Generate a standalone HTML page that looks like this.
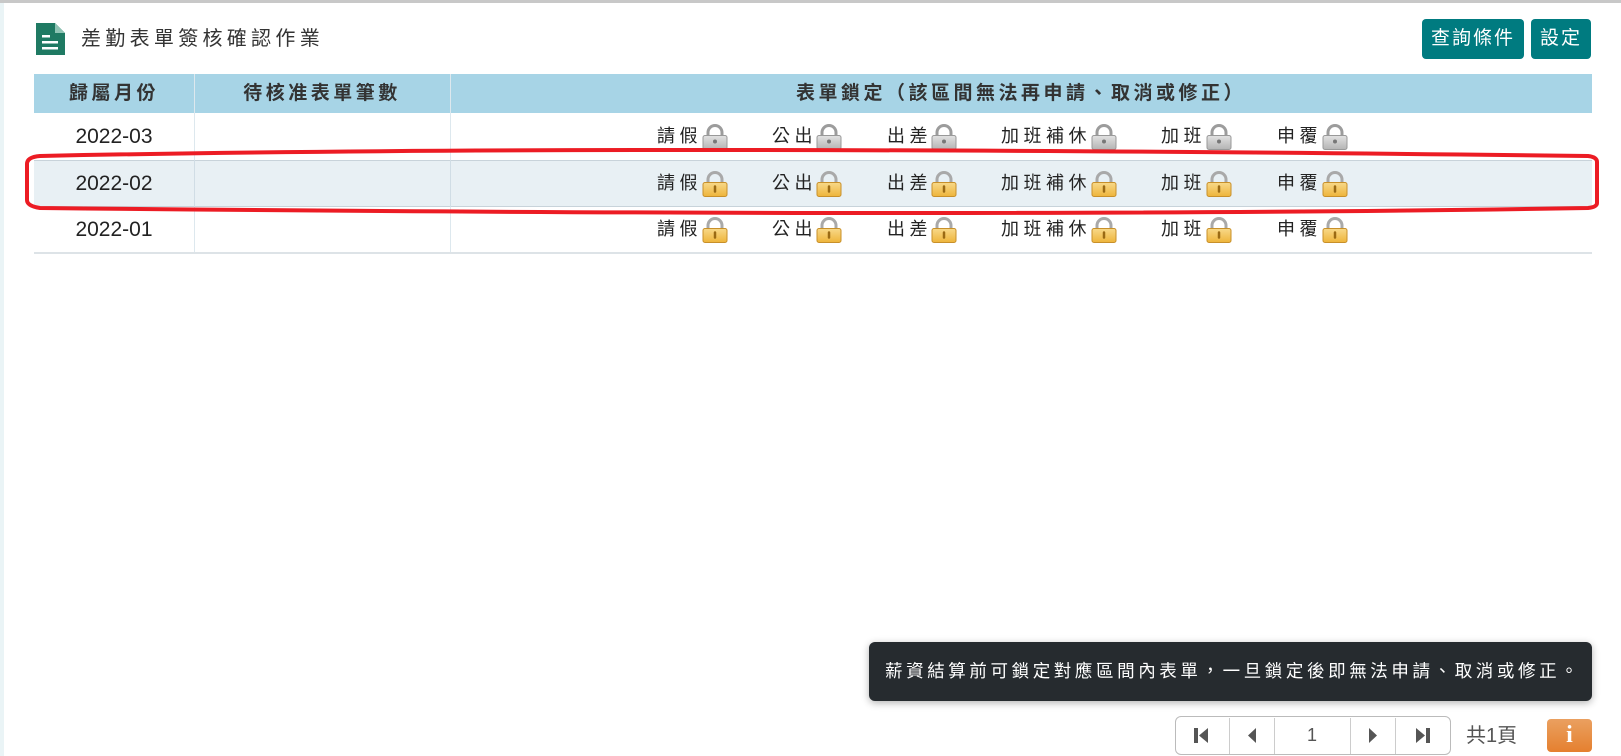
<!DOCTYPE html>
<html><head><meta charset="utf-8"><style>
*{margin:0;padding:0;box-sizing:border-box}
body{width:1621px;height:756px;background:#fff;position:relative;overflow:hidden;font-family:"Liberation Sans","Noto Sans CJK TC",sans-serif;color:#222}
.abs{position:absolute}
.topbar{left:0;top:0;width:1621px;height:3px;background:#c8c8c8}
.leftbar{left:0;top:3px;width:4px;height:753px;background:#eaf4f6}
.title{left:81px;top:24px;font-size:20px;letter-spacing:4.3px;color:#333;line-height:30px}
.btn{background:#007b80;color:#fff;border-radius:4px;font-size:19px;letter-spacing:2px;text-align:center;line-height:40px;top:19px;height:40px}
.hdr{left:34px;top:74px;width:1558px;height:39px;background:#a7d4e6}
.hc{top:74px;height:39px;line-height:39px;text-align:center;font-weight:bold;font-size:19px;letter-spacing:3.5px;color:#333}
.vline{width:1px;background:#d7e6ee}
.row{left:34px;width:1558px;height:47px}
.date{left:34px;width:160px;text-align:center;font-size:21px;line-height:47px}
.it{font-size:18px;letter-spacing:4.5px;line-height:26px;white-space:nowrap}
.tip{left:869px;top:642px;width:723px;height:59px;background:#262b2f;border-radius:6px;color:#fff;font-size:17.5px;letter-spacing:3.6px;line-height:59px;padding-left:16px;box-shadow:0 2px 8px rgba(0,0,0,.3);white-space:nowrap}
.pager{left:1175px;top:716px;width:276px;height:39px;border:1px solid #bbb;border-radius:6px}
.sep{top:718px;width:1px;height:36px;background:#ccc}
</style></head><body>
<div class="abs topbar"></div><div class="abs leftbar"></div>
<svg class="abs" style="left:36px;top:23px" width="29" height="32" viewBox="0 0 29 32"><path d="M0 0H19L29 10V32H0Z" fill="#1f7a63"/><path d="M19 0V10H29Z" fill="#8fc4b4"/><rect x="6" y="12" width="8" height="2.5" fill="#fff"/><rect x="6" y="18" width="16" height="2.5" fill="#fff"/><rect x="6" y="24" width="16" height="2.5" fill="#fff"/></svg>
<div class="abs title">差勤表單簽核確認作業</div>
<div class="abs btn" style="left:1422px;width:102px">查詢條件</div>
<div class="abs btn" style="left:1531px;width:60px">設定</div>
<div class="abs hdr"></div>
<div class="abs hc" style="left:34px;width:160px">歸屬月份</div>
<div class="abs hc" style="left:194px;width:256px">待核准表單筆數</div>
<div class="abs hc" style="left:450px;width:1142px">表單鎖定（該區間無法再申請、取消或修正）</div>
<div class="abs vline" style="left:194px;top:74px;height:179px;background:#dde8ee"></div>
<div class="abs vline" style="left:450px;top:74px;height:179px;background:#dde8ee"></div>
<div class="abs row" style="top:160px;height:47px;background:#e8f0f4;border-top:1px solid #c8d3da;border-bottom:1px solid #c8d3da"></div>
<div class="abs" style="left:34px;top:252px;width:1558px;height:2px;background:#dde3e7"></div>
<div class="abs vline" style="left:194px;top:160px;height:47px;background:#d0dde5"></div>
<div class="abs vline" style="left:450px;top:160px;height:47px;background:#d0dde5"></div>
<div class="abs date" style="top:113px">2022-03</div>
<div class="abs date" style="top:160px">2022-02</div>
<div class="abs date" style="top:206px">2022-01</div>
<svg width="0" height="0" style="position:absolute"><defs>
<linearGradient id="gg" x1="0" y1="0" x2="0" y2="1"><stop offset="0" stop-color="#e2e2e2"/><stop offset="1" stop-color="#b4b4b4"/></linearGradient>
<linearGradient id="gy" x1="0" y1="0" x2="0" y2="1"><stop offset="0" stop-color="#f8d98a"/><stop offset="1" stop-color="#eeb43a"/></linearGradient>
<symbol id="lg" viewBox="0 0 26 26"><path d="M6 12V8a7 7 0 0 1 14 0v4" fill="none" stroke="#9c9c9c" stroke-width="3"/><rect x="1" y="11" width="24" height="14" rx="2" fill="url(#gg)" stroke="#999"/><circle cx="13" cy="17" r="2" fill="#777"/></symbol>
<symbol id="ly" viewBox="0 0 26 26"><path d="M6 12V8a7 7 0 0 1 14 0v4" fill="none" stroke="#a9a9a9" stroke-width="3"/><rect x="1" y="11" width="24" height="14" rx="2" fill="url(#gy)" stroke="#c8902a"/><path d="M13 15v5" stroke="#9a6a14" stroke-width="2.5" stroke-linecap="round"/></symbol>
</defs></svg>
<div id="locks"></div>
<script>
var items=[["請假",657,702],["公出",772,816],["出差",887,931],["加班補休",1001,1091],["加班",1161,1206],["申覆",1277,1322]];
var rows=[[124,"lg"],[171,"ly"],[217,"ly"]];var h="";
rows.forEach(function(r){items.forEach(function(i){
h+='<div class="abs it" style="left:'+i[1]+'px;top:'+(r[0]-1)+'px">'+i[0]+'</div>';
h+='<svg class="abs" style="left:'+i[2]+'px;top:'+r[0]+'px" width="26" height="27"><use href="#'+r[1]+'"/></svg>';});});
document.getElementById("locks").innerHTML=h;
</script>
<svg class="abs" style="left:0;top:0" width="1621" height="260"><path d="M40,156 Q600,144 1588,156 Q1597,157 1597,162 L1597,203 Q1597,207 1588,208 Q1000,218 40,208 Q27,206 27,200 L27,164 Q27,157 40,156 Z" fill="none" stroke="#ec1c24" stroke-width="4"/></svg>
<div class="abs tip">薪資結算前可鎖定對應區間內表單，一旦鎖定後即無法申請、取消或修正。</div>
<div class="abs pager"></div>
<div class="abs sep" style="left:1229px"></div><div class="abs sep" style="left:1274px"></div><div class="abs sep" style="left:1350px"></div><div class="abs sep" style="left:1395px"></div>
<svg class="abs" style="left:1193px;top:726px" width="20" height="20"><rect x="1" y="2" width="4" height="15" fill="#555"/><path d="M15 2V17L6 9.5Z" fill="#555"/></svg>
<svg class="abs" style="left:1245px;top:726px" width="14" height="20"><path d="M11 2V17L3 9.5Z" fill="#555"/></svg>
<div class="abs" style="left:1274px;top:716px;width:76px;text-align:center;line-height:39px;font-size:18px;color:#555">1</div>
<svg class="abs" style="left:1366px;top:726px" width="14" height="20"><path d="M3 2V17L11 9.5Z" fill="#555"/></svg>
<svg class="abs" style="left:1413px;top:726px" width="20" height="20"><path d="M3 2V17L12 9.5Z" fill="#555"/><rect x="13" y="2" width="4" height="15" fill="#555"/></svg>
<div class="abs" style="left:1466px;top:719px;font-size:20px;color:#555;line-height:34px">共1頁</div>
<div class="abs" style="left:1547px;top:719px;width:45px;height:33px;border-radius:4px;background:linear-gradient(#eaa060,#e5802f);color:#fff;font-size:24px;font-weight:bold;text-align:center;line-height:33px;font-family:'Liberation Serif',serif">i</div>
</body></html>
